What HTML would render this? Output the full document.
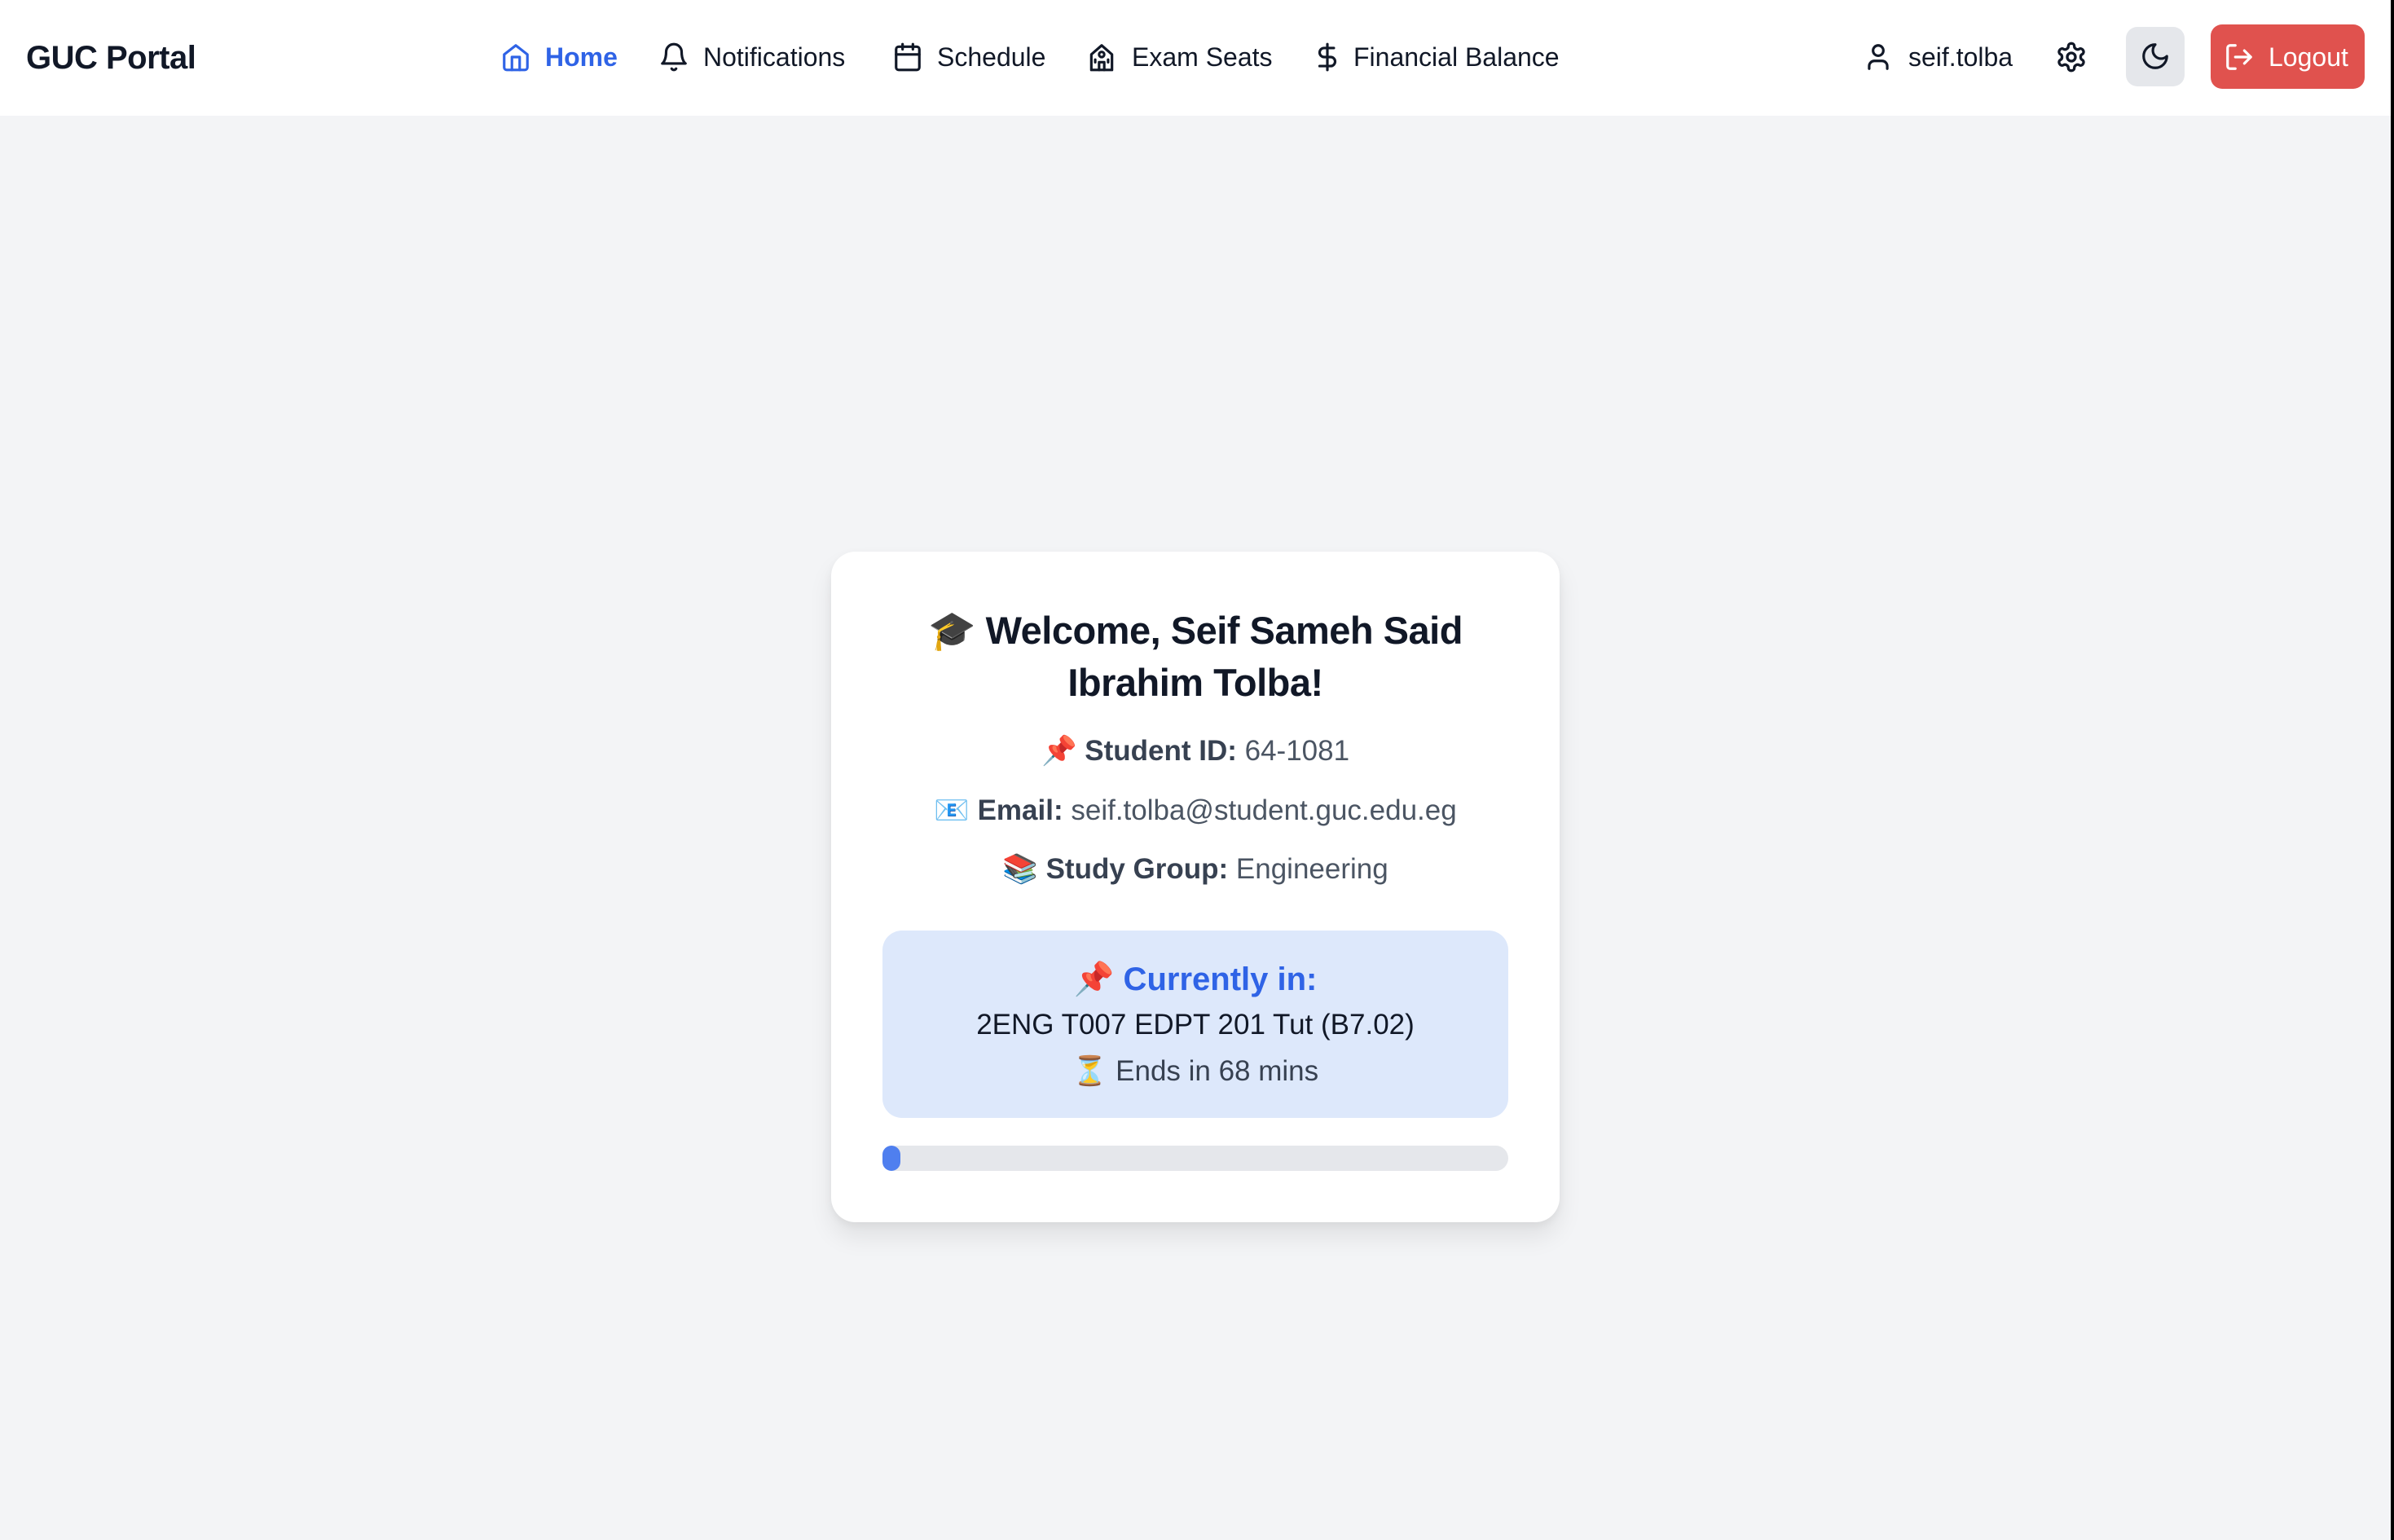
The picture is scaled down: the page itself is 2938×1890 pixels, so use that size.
<!DOCTYPE html>
<html><head><meta charset="utf-8"><style>
*{box-sizing:border-box;margin:0;padding:0}
body{width:2938px;height:1890px;background:#f3f4f6;font-family:"Liberation Sans",sans-serif;position:relative;overflow:hidden;color:#111827}
.edge{position:absolute;right:0;top:0;width:4px;height:1890px;background:#000}
nav{position:absolute;left:0;top:0;width:2934px;height:142px;background:#fff}
.logo{position:absolute;left:32px;top:49px;font-size:40px;font-weight:bold;color:#111827;letter-spacing:-0.5px}
.it{position:absolute;top:50px;font-size:32px;color:#111827;display:flex;align-items:center;height:40px}
.it svg{position:absolute;left:0;top:0}
.it span{position:absolute;white-space:nowrap}
.moon{position:absolute;left:2609px;top:33px;width:72px;height:73px;background:#e5e7eb;border-radius:14px}
.logout{position:absolute;left:2713px;top:30px;width:189px;height:79px;background:#e0524e;border-radius:14px;color:#fff;font-size:32px}
.card{position:absolute;left:1020px;top:677px;width:894px;height:823px;background:#fff;border-radius:30px;box-shadow:0 18px 30px rgba(0,0,0,0.08),0 4px 10px rgba(0,0,0,0.05);text-align:center}
.t{position:absolute;left:0;width:100%;font-size:47px;font-weight:bold;color:#111827;letter-spacing:-0.5px}
.l{position:absolute;left:0;width:100%;font-size:35px;color:#4b5563}
.l b{color:#374151}
.box{position:absolute;left:63px;top:465px;width:768px;height:230px;background:#dde8fb;border-radius:24px}
.bar{position:absolute;left:63px;top:729px;width:768px;height:31px;background:#e5e7eb;border-radius:16px}
.fill{position:absolute;left:0;top:0;width:22px;height:31px;background:#4f7fef;border-radius:16px}
</style></head><body>
<nav>
<div class="logo">GUC Portal</div>
<div class="it" style="left:614px;color:#2f63e6;font-weight:bold">
<svg width="38" height="40" viewBox="0 0 24 24" fill="none" stroke="#2f63e6" stroke-width="2" stroke-linecap="round" stroke-linejoin="round"><path d="M3 10l9-7 9 7v10a2 2 0 0 1-2 2H5a2 2 0 0 1-2-2z"/><path d="M9 22V12h6v10"/></svg>
<span style="left:55px;top:2px">Home</span></div>
<div class="it" style="left:808px">
<svg width="38" height="40" viewBox="0 0 24 24" fill="none" stroke="#111827" stroke-width="2" stroke-linecap="round" stroke-linejoin="round"><path d="M6 8a6 6 0 0 1 12 0c0 7 3 9 3 9H3s3-2 3-9"/><path d="M10.3 21a1.94 1.94 0 0 0 3.4 0"/></svg>
<span style="left:55px;top:2px">Notifications</span></div>
<div class="it" style="left:1095px">
<svg width="38" height="40" viewBox="0 0 24 24" fill="none" stroke="#111827" stroke-width="2" stroke-linecap="round" stroke-linejoin="round"><rect x="3" y="4" width="18" height="18" rx="2"/><path d="M16 2v4M8 2v4M3 10h18"/></svg>
<span style="left:55px;top:2px">Schedule</span></div>
<div class="it" style="left:1333px">
<svg width="38" height="40" viewBox="0 0 24 24" fill="none" stroke="#111827" stroke-width="2" stroke-linecap="round" stroke-linejoin="round"><path d="M4 22V10l8-7 8 7v12z"/><circle cx="12" cy="10" r="2"/><path d="M10 22v-6h4v6M7 14v2M17 14v2"/></svg>
<span style="left:56px;top:2px">Exam Seats</span></div>
<div class="it" style="left:1610px">
<svg width="38" height="40" viewBox="0 0 24 24" fill="none" stroke="#111827" stroke-width="2" stroke-linecap="round" stroke-linejoin="round"><path d="M12 2v20M17 5H9.5a3.5 3.5 0 0 0 0 7h5a3.5 3.5 0 0 1 0 7H6"/></svg>
<span style="left:51px;top:2px">Financial Balance</span></div>
<div class="it" style="left:2286px">
<svg width="38" height="40" viewBox="0 0 24 24" fill="none" stroke="#111827" stroke-width="2" stroke-linecap="round" stroke-linejoin="round"><circle cx="12" cy="7" r="4"/><path d="M19 21v-2a4 4 0 0 0-4-4H9a4 4 0 0 0-4 4v2"/></svg>
<span style="left:56px;top:2px">seif.tolba</span></div>
<div class="it" style="left:2522px">
<svg width="40" height="40" viewBox="0 0 24 24" fill="none" stroke="#111827" stroke-width="2" stroke-linecap="round" stroke-linejoin="round"><path d="M12.22 2h-.44a2 2 0 0 0-2 2v.18a2 2 0 0 1-1 1.730l-.43.25a2 2 0 0 1-2 0l-.15-.08a2 2 0 0 0-2.73.73l-.22.38a2 2 0 0 0 .73 2.73l.15.1a2 2 0 0 1 1 1.72v.51a2 2 0 0 1-1 1.74l-.15.09a2 2 0 0 0-.73 2.73l.22.38a2 2 0 0 0 2.73.73l.15-.08a2 2 0 0 1 2 0l.43.25a2 2 0 0 1 1 1.73V20a2 2 0 0 0 2 2h.44a2 2 0 0 0 2-2v-.18a2 2 0 0 1 1-1.73l.43-.25a2 2 0 0 1 2 0l.15.08a2 2 0 0 0 2.73-.73l.22-.39a2 2 0 0 0-.73-2.730l-.15-.08a2 2 0 0 1-1-1.74v-.5a2 2 0 0 1 1-1.74l.15-.09a2 2 0 0 0 .73-2.73l-.22-.38a2 2 0 0 0-2.73-.73l-.15.08a2 2 0 0 1-2 0l-.43-.25a2 2 0 0 1-1-1.73V4a2 2 0 0 0-2-2z"/><circle cx="12" cy="12" r="3"/></svg></div>
<div class="moon"><svg style="position:absolute;left:17px;top:17px" width="38" height="38" viewBox="0 0 24 24" fill="none" stroke="#111827" stroke-width="2" stroke-linecap="round" stroke-linejoin="round"><path d="M12 3a6 6 0 0 0 9 9 9 9 0 1 1-9-9z"/></svg></div>
<div class="logout"><svg style="position:absolute;left:16px;top:21px" width="38" height="38" viewBox="0 0 24 24" fill="none" stroke="#fff" stroke-width="2" stroke-linecap="round" stroke-linejoin="round"><path d="M9 21H5a2 2 0 0 1-2-2V5a2 2 0 0 1 2-2h4"/><path d="M16 17l5-5-5-5M21 12H9"/></svg><span style="position:absolute;left:71px;top:22px">Logout</span></div>
</nav>
<div class="card">
<div class="t" style="top:69px">🎓 Welcome, Seif Sameh Said</div>
<div class="t" style="top:133px">Ibrahim Tolba!</div>
<div class="l" style="top:224px">📌 <b>Student ID:</b> 64-1081</div>
<div class="l" style="top:297px">📧 <b>Email:</b> seif.tolba@student.guc.edu.eg</div>
<div class="l" style="top:369px">📚 <b>Study Group:</b> Engineering</div>
<div class="box">
<div style="position:absolute;top:36px;width:100%;font-size:40px;font-weight:bold;color:#2f63e6">📌 Currently in:</div>
<div style="position:absolute;top:96px;width:100%;font-size:35px;color:#111827">2ENG T007 EDPT 201 Tut (B7.02)</div>
<div style="position:absolute;top:152px;width:100%;font-size:35px;color:#374151">⏳ Ends in 68 mins</div>
</div>
<div class="bar"><div class="fill"></div></div>
</div>
<div class="edge"></div>
</body></html>
